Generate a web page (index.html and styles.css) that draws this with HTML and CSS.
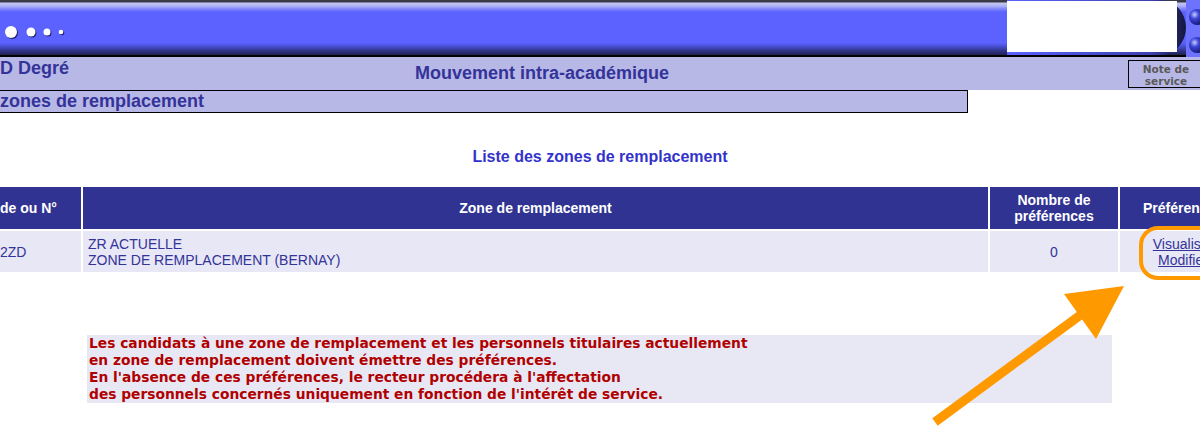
FILE: index.html
```html
<!DOCTYPE html>
<html lang="fr">
<head>
    <meta charset="UTF-8">
    <title>Mouvement intra-académique</title>
    <link rel="stylesheet" href="styles.css">
</head>
<body>
    <!-- Bandeau du haut -->
    <div class="banner">
        <svg class="dots" width="80" height="57" viewBox="0 0 80 57">
            <circle cx="12" cy="33" r="6" fill="#1e2266"/>
            <circle cx="11" cy="32" r="6" fill="#fff"/>
            <circle cx="32" cy="33" r="4.5" fill="#1e2266"/>
            <circle cx="31" cy="32" r="4.5" fill="#fff"/>
            <circle cx="48" cy="33" r="3.5" fill="#1e2266"/>
            <circle cx="47" cy="32" r="3.5" fill="#fff"/>
            <circle cx="62" cy="33" r="2.3" fill="#1e2266"/>
            <circle cx="61" cy="32" r="2.3" fill="#fff"/>
        </svg>
        <div class="banner-fill"></div>
        <div class="frame">
            <div class="screen"></div>
        </div>
        <div class="balls">
            <span class="ball"></span>
            <span class="ball"></span>
        </div>
    </div>

    <!-- Barre de titre -->
    <div class="titlebar">
        <div class="degree">D Degré</div>
        <div class="title">Mouvement intra-académique</div>
        <div class="note">Note de<br>service</div>
    </div>
    <div class="subtitle">zones de remplacement</div>

    <h2 class="list-title">Liste des zones de remplacement</h2>

    <table class="zones">
        <thead>
            <tr>
                <th class="col-code">de ou N°</th>
                <th class="col-zone">Zone de remplacement</th>
                <th class="col-count">Nombre de<br>préférences</th>
                <th class="col-pref">Préférences</th>
            </tr>
        </thead>
        <tbody>
            <tr>
                <td class="col-code">2ZD</td>
                <td class="zone-name">ZR ACTUELLE<br>ZONE DE REMPLACEMENT (BERNAY)</td>
                <td>0</td>
                <td><a href="#">Visualiser</a><br><a href="#">Modifier</a></td>
            </tr>
        </tbody>
    </table>

    <div class="notice">
        Les candidats à une zone de remplacement et les personnels titulaires actuellement<br>
        en zone de remplacement doivent émettre des préférences.<br>
        En l'absence de ces préférences, le recteur procédera à l'affectation<br>
        des personnels concernés uniquement en fonction de l'intérêt de service.
    </div>

    <!-- Annotation orange -->
    <svg class="annotation" width="1200" height="448" viewBox="0 0 1200 448">
        <rect x="1141" y="228" width="90" height="50" rx="17" fill="none" stroke="#ff9900" stroke-width="4"/>
        <line x1="935" y1="422" x2="1090" y2="308" stroke="#ff9900" stroke-width="9"/>
        <polygon points="1064,294 1124,286 1096,339" fill="#ff9900"/>
    </svg>
</body>
</html>
```

FILE: styles.css
```css
body {
    margin: 0;
    padding: 0;
    width: 1200px;
    height: 448px;
    overflow: hidden;
    position: relative;
    background-color: #fff;
    font-family: "Liberation Sans", Arial, sans-serif;
}
.banner {
    display: flex;
    height: 57px;
    background: linear-gradient(to bottom, #3a3a48 0, #3a3a48 2px, #c4c6f2 3px, #b0b3f6 6px, #7f84fa 9px, #5b62ff 12px, #5b62ff 43px, #454cc8 47px, #2e3284 51px, #1f2150 55px, #000 55px, #000 57px);
}
.dots {
    flex: none;
}
.banner-fill {
    flex: 1;
}
.frame {
    flex: none;
    width: 179px;
    height: 55px;
    border-radius: 0 28px 28px 0 / 0 30px 30px 0;
    background: linear-gradient(to right, #5b62ff 0, #3c41b0 80%, #15173d 100%);
}
.screen {
    width: 170px;
    height: 51px;
    margin-top: 1px;
    background-color: #fff;
}
.balls {
    flex: none;
    width: 11px;
    display: flex;
    flex-direction: column;
    gap: 12px;
    padding: 9px 0 0 3px;
    background-color: #6d73ff;
}
.ball {
    display: block;
    flex: none;
    width: 16px;
    height: 16px;
    border-radius: 50%;
    background: radial-gradient(circle at 35% 35%, #c8ccff 0, #3c44d8 30%, #141870 75%);
}
.titlebar {
    display: grid;
    grid-template-columns: 80px 924px 1fr;
    height: 33px;
    background-color: #b8b8e6;
    color: #333399;
    font-weight: bold;
    font-size: 18px;
}
.degree {
    padding-top: 1px;
    white-space: nowrap;
}
.title {
    padding-top: 6px;
    text-align: center;
}
.note {
    justify-self: end;
    width: 76px;
    height: 28px;
    margin-top: 3px;
    margin-right: -4px;
    border: 1px solid #000;
    font-family: "DejaVu Sans", Verdana, sans-serif;
    font-size: 10.5px;
    line-height: 12px;
    padding-top: 2px;
    box-sizing: border-box;
    text-align: center;
    color: #5a5a5a;
}
.subtitle {
    width: 967px;
    height: 21px;
    background-color: #b8b8e6;
    border: 1px solid #000;
    border-left: none;
    color: #333399;
    font-weight: bold;
    font-size: 18px;
    line-height: 21px;
}
.list-title {
    margin: 35px 0 0 0;
    height: 39px;
    text-align: center;
    font-size: 16px;
    color: #3333cc;
}
.zones {
    table-layout: fixed;
    width: 1250px;
    border-spacing: 2px;
    margin: -2px 0 0 -2px;
    font-size: 14px;
    color: #333399;
}
.zones th {
    height: 42px;
    padding: 0;
    background-color: #303392;
    color: #fff;
    font-weight: bold;
    line-height: 16px;
}
.zones td {
    height: 41px;
    padding: 0;
    background-color: #e7e7f5;
    text-align: center;
}
.col-code {
    width: 81px;
}
.zones th.col-code,
.zones td.col-code {
    text-align: left;
    white-space: nowrap;
}
.col-zone {
    width: 905px;
}
.col-count {
    width: 128px;
}
.col-pref {
    width: 126px;
}
.zones td.zone-name {
    text-align: left;
    padding-left: 5px;
    line-height: 16px;
}
.zones a {
    color: #333399;
    line-height: 16px;
}
.notice {
    width: 1023px;
    height: 68px;
    margin: 61px 0 0 87px;
    padding-left: 2px;
    background-color: #e8e8f5;
    color: #b00000;
    font-family: "DejaVu Sans", Verdana, sans-serif;
    font-weight: bold;
    font-size: 13.8px;
    line-height: 17px;
}
.annotation {
    position: absolute;
    left: 0;
    top: 0;
    pointer-events: none;
}
```
